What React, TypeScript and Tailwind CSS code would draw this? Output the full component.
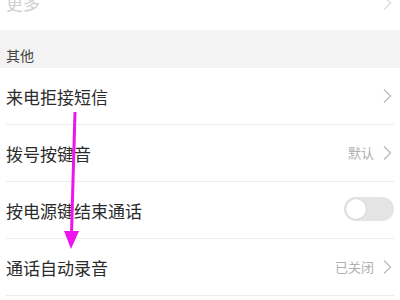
import React from "react";

const font = { fontFamily: '"Noto Sans CJK SC", "Noto Sans", sans-serif' };

function Chevron({ light }: { light?: boolean }) {
  return (
    <svg width="10" height="16" viewBox="0 0 10 16" className="shrink-0">
      <path d="M2 1.5 L8.5 8 L2 14.5" fill="none" stroke={light ? "#dcdcdc" : "#bdbdbd"} strokeWidth="1.4" />
    </svg>
  );
}

function Row({ label, right, divider = true, h = "h-[57px]" }: { label: string; right?: React.ReactNode; divider?: boolean; h?: string }) {
  return (
    <div className={`${h} mx-[6px] flex items-center justify-between ${divider ? "border-b border-[#ececec]" : ""}`}>
      <span className="text-[17px] text-[#2b2b2b] leading-none">{label}</span>
      <div className="flex items-center gap-[8px] pr-[2px]">{right}</div>
    </div>
  );
}

export default function App() {
  return (
    <div className="relative w-[400px] h-[300px] overflow-hidden bg-white" style={font}>
      <div className="-mt-[25px] h-[55px] mx-[6px] flex items-center justify-between">
        <span className="text-[17px] text-[#cfcfcf] leading-none">更多</span>
        <div className="pr-[2px]"><Chevron light /></div>
      </div>
      <div className="h-[38px] bg-[#f3f3f3] flex items-end pb-[6px] px-[6px]">
        <span className="text-[14px] text-[#444] leading-none">其他</span>
      </div>
      <Row label="来电拒接短信" right={<Chevron />} />
      <Row label="拨号按键音" right={<><span className="text-[13px] text-[#b0b0b0]">默认</span><Chevron /></>} />
      <Row
        label="按电源键结束通话"
        right={
          <div className="w-[50px] h-[24px] rounded-full bg-[#e4e4e4] flex items-center px-[2px] -mr-[2px] -mt-[3px]">
            <div className="w-[20px] h-[20px] rounded-full bg-white shadow-[0_0_2px_rgba(0,0,0,0.15)]" />
          </div>
        }
      />
      <Row label="通话自动录音" right={<><span className="text-[13px] text-[#b0b0b0]">已关闭</span><Chevron /></>} />
      <svg className="absolute left-0 top-0 pointer-events-none" width="400" height="300">
        <line x1="75" y1="112" x2="71.5" y2="233" stroke="#ee14ee" strokeWidth="3" />
        <polygon points="64,231 79,231 71,249" fill="#ee14ee" />
      </svg>
    </div>
  );
}
